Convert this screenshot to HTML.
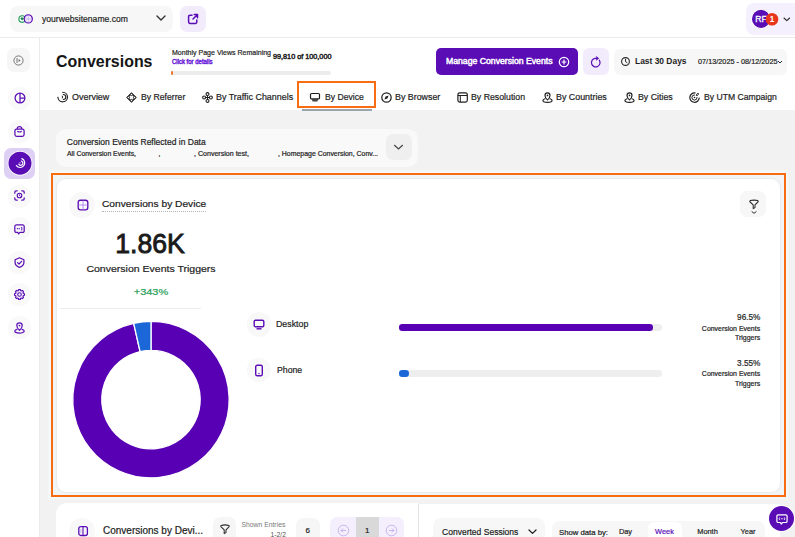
<!DOCTYPE html>
<html><head><meta charset="utf-8"><style>
html,body{margin:0;padding:0;width:795px;height:537px;overflow:hidden;background:#fff;}
body{position:relative;font-family:"Liberation Sans",sans-serif;}
.t{position:absolute;white-space:nowrap;line-height:1;}
.b{position:absolute;box-sizing:border-box;}
svg.b{overflow:visible}
</style></head><body>
<div class="b" style="left:0px;top:0px;width:795px;height:537px;background:#ffffff;border-radius:0px;"></div>
<div class="b" style="left:39.5px;top:110px;width:756px;height:427px;background:#f2f2f2;border-radius:0px;"></div>
<div class="b" style="left:0px;top:37px;width:795px;height:1px;background:#ebebeb;border-radius:0px;"></div>
<div class="b" style="left:38.6px;top:38px;width:1.2px;height:499px;background:#ececec;border-radius:0px;"></div>
<div class="b" style="left:10px;top:6px;width:163px;height:26px;background:#f7f7f7;border-radius:8px;"></div>
<svg class="b" style="left:14px;top:8px;" width="26" height="22" viewBox="0 0 26 22"><circle cx="8.2" cy="11.1" r="3.3" fill="#fff" stroke="#1a9a55" stroke-width="1.1"/><path d="M6.9 10.5 a0.75 0.75 0 0 1 1.3-0.5 a0.75 0.75 0 0 1 1.3 0.5 c0 0.8-1.3 1.5-1.3 1.5 c0 0-1.3-0.7-1.3-1.5z" fill="#12883f" stroke="#12883f" stroke-width="0.7"/><circle cx="14.3" cy="10.9" r="4.0" fill="#fbf8ff" stroke="#5b0db5" stroke-width="1.3"/><path d="M14.3 7.1 V14.7 M10.5 10.9 H18.1" stroke="#c2a6f0" stroke-width="0.7"/><path d="M12.9 7.5 Q11.9 10.9 12.9 14.3 M15.7 7.5 Q16.7 10.9 15.7 14.3" stroke="#d6c3f5" stroke-width="0.6" fill="none"/></svg>
<div class="t" style="left:42px;top:14.00px;font-size:9.8px;font-weight:400;color:#1e1e1e;letter-spacing:0.000px;-webkit-text-stroke:0.2px currentColor;transform:scaleX(0.877);transform-origin:left 0;">yourwebsitename.com</div>
<svg class="b" style="left:156px;top:15px;" width="10" height="7" viewBox="0 0 10 7"><path d="M1 1 L5 5 L9 1" stroke="#333" stroke-width="1.4" fill="none" stroke-linecap="round" stroke-linejoin="round"/></svg>
<div class="b" style="left:180px;top:6px;width:26px;height:26px;background:#f1ebfc;border-radius:7px;"></div>
<svg class="b" style="left:187px;top:13px;" width="12" height="12" viewBox="0 0 12 12"><path d="M5 2.2 H3 a1.4 1.4 0 0 0-1.4 1.4 V9 a1.4 1.4 0 0 0 1.4 1.4 H8.4 A1.4 1.4 0 0 0 9.8 9 V7" stroke="#5b0db5" stroke-width="1.5" fill="none" stroke-linecap="round"/><path d="M6 6 L10.5 1.5 M7.2 1.5 H10.5 V4.8" stroke="#5b0db5" stroke-width="1.5" fill="none" stroke-linecap="round" stroke-linejoin="round"/></svg>
<div class="b" style="left:746.3px;top:3.4px;width:60px;height:31.7px;background:#f4f0fd;border-radius:8px;"></div>
<svg class="b" style="left:750px;top:8px;" width="32" height="22" viewBox="0 0 32 22"><circle cx="11" cy="10.9" r="9.6" fill="#5b0db5" stroke="#fff" stroke-width="1.1"/><text x="11" y="14" font-family="Liberation Sans" font-size="8.6" font-weight="400" fill="#fff" stroke="#fff" stroke-width="0.3" text-anchor="middle">RF</text><circle cx="22" cy="11.2" r="6.3" fill="#e8361c"/><text x="22" y="14.2" font-family="Liberation Sans" font-size="8.2" font-weight="700" fill="#fff" text-anchor="middle">1</text></svg>
<svg class="b" style="left:783px;top:16.5px;" width="8" height="6" viewBox="0 0 8 6"><path d="M1 1 L3.8 3.6 L6.6 1" stroke="#2a2a2a" stroke-width="1.1" fill="none" stroke-linecap="round" stroke-linejoin="round"/></svg>
<div class="b" style="left:7px;top:47.5px;width:23px;height:24.5px;background:#f6f6f6;border-radius:7px;"></div>
<svg class="b" style="left:13px;top:54.5px;" width="11" height="11" viewBox="0 0 11 11"><circle cx="5.5" cy="5.5" r="4.6" stroke="#6a6a6a" stroke-width="0.9" fill="none"/><path d="M4 3 v5" stroke="#6a6a6a" stroke-width="0.9"/><path d="M5.6 4 L7.6 5.5 L5.6 7z" fill="#6a6a6a"/></svg>
<div class="b" style="left:8.0px;top:86.5px;width:23px;height:23px;background:#f9f9f9;border-radius:11.5px;"></div>
<div class="b" style="left:8.0px;top:119.5px;width:23px;height:23px;background:#f9f9f9;border-radius:11.5px;"></div>
<div class="b" style="left:8.0px;top:184.5px;width:23px;height:23px;background:#f9f9f9;border-radius:11.5px;"></div>
<div class="b" style="left:8.0px;top:217.0px;width:23px;height:23px;background:#f9f9f9;border-radius:11.5px;"></div>
<div class="b" style="left:8.0px;top:250.5px;width:23px;height:23px;background:#f9f9f9;border-radius:11.5px;"></div>
<div class="b" style="left:8.0px;top:283.0px;width:23px;height:23px;background:#f9f9f9;border-radius:11.5px;"></div>
<div class="b" style="left:8.0px;top:316.0px;width:23px;height:23px;background:#f9f9f9;border-radius:11.5px;"></div>
<svg class="b" style="left:13.5px;top:92px;" width="12" height="12" viewBox="0 0 12 12"><circle cx="6" cy="6" r="4.9" stroke="#5b0db5" stroke-width="1.25" fill="none"/><path d="M6 1.1 V10.9 M6 6 H10.9" stroke="#5b0db5" stroke-width="1.25"/></svg>
<svg class="b" style="left:14px;top:125.5px;" width="11" height="11" viewBox="0 0 11 11"><rect x="0.9" y="3" width="9.2" height="7.3" rx="1.8" stroke="#5b0db5" stroke-width="1.25" fill="none"/><path d="M3.3 3 V2.6 A2.2 2 0 0 1 7.7 2.6 V3" stroke="#5b0db5" stroke-width="1.25" fill="none"/><path d="M3.3 5.2 Q5.5 6.8 7.7 5.2" stroke="#5b0db5" stroke-width="1.1" fill="none"/></svg>
<div class="b" style="left:4.3px;top:148px;width:30.5px;height:30.7px;background:#ddd0f4;border-radius:7px;"></div>
<svg class="b" style="left:6.5px;top:150.3px;" width="26" height="26" viewBox="0 0 26 26"><circle cx="13" cy="13.2" r="12.3" fill="#fff"/><circle cx="13" cy="13.2" r="11.5" fill="#5b0db5"/><path d="M9.4 15.6 A4.6 4.6 0 1 0 14.8 8.6 M11.8 14.2 A2.2 2.2 0 1 0 14.4 11 M12.9 12.8 h.1" stroke="#fff" stroke-width="1.2" fill="none" stroke-linecap="round"/></svg>
<svg class="b" style="left:14px;top:190px;" width="11" height="11" viewBox="0 0 11 11"><path d="M0.8 3.2 V2.2 A1.4 1.4 0 0 1 2.2 0.8 H3.2 M7.8 0.8 H8.8 A1.4 1.4 0 0 1 10.2 2.2 V3.2 M10.2 7.8 V8.8 A1.4 1.4 0 0 1 8.8 10.2 H7.8 M3.2 10.2 H2.2 A1.4 1.4 0 0 1 0.8 8.8 V7.8" stroke="#5b0db5" stroke-width="1.25" fill="none" stroke-linecap="round"/><circle cx="5.5" cy="5.5" r="2.3" stroke="#5b0db5" stroke-width="1.1" fill="none"/><path d="M5.5 4.3 V5.6 L6.5 6.2" stroke="#5b0db5" stroke-width="0.9" fill="none"/></svg>
<svg class="b" style="left:14px;top:223.5px;" width="11" height="11" viewBox="0 0 11 11"><path d="M2.3 0.9 H8.7 A1.5 1.5 0 0 1 10.2 2.4 V6.9 A1.5 1.5 0 0 1 8.7 8.4 H6 L4.6 9.9 L3.9 8.4 H2.3 A1.5 1.5 0 0 1 0.8 6.9 V2.4 A1.5 1.5 0 0 1 2.3 0.9z" stroke="#5b0db5" stroke-width="1.25" fill="none" stroke-linejoin="round"/><path d="M3.4 4.7 h.1 M5.2 4.7 h.1" stroke="#5b0db5" stroke-width="1.3" stroke-linecap="round"/><path d="M7 3.4 H7.9 V6 H7" stroke="#5b0db5" stroke-width="0.9" fill="none"/></svg>
<svg class="b" style="left:14px;top:256.8px;" width="11" height="11" viewBox="0 0 11 11"><path d="M5.5 0.8 L9.9 2.8 V5.6 C9.9 8 7.9 9.6 5.5 10.3 C3.1 9.6 1.1 8 1.1 5.6 V2.8z" stroke="#5b0db5" stroke-width="1.25" fill="none" stroke-linejoin="round"/><path d="M3.5 5.6 L5 7 L7.6 4.3" stroke="#5b0db5" stroke-width="1.2" fill="none" stroke-linecap="round" stroke-linejoin="round"/></svg>
<svg class="b" style="left:14px;top:289px;" width="11" height="11" viewBox="0 0 11 11"><path d="M4.72 0.56 L6.28 0.56 L6.74 1.80 L7.24 2.01 L8.44 1.45 L9.55 2.56 L8.99 3.76 L9.20 4.26 L10.44 4.72 L10.44 6.28 L9.20 6.74 L8.99 7.24 L9.55 8.44 L8.44 9.55 L7.24 8.99 L6.74 9.20 L6.28 10.44 L4.72 10.44 L4.26 9.20 L3.76 8.99 L2.56 9.55 L1.45 8.44 L2.01 7.24 L1.80 6.74 L0.56 6.28 L0.56 4.72 L1.80 4.26 L2.01 3.76 L1.45 2.56 L2.56 1.45 L3.76 2.01 L4.26 1.80z" stroke="#5b0db5" stroke-width="1.2" fill="none" stroke-linejoin="round"/><circle cx="5.5" cy="5.5" r="1.8" stroke="#5b0db5" stroke-width="1.1" fill="none"/></svg>
<svg class="b" style="left:14px;top:321.5px;" width="11" height="12" viewBox="0 0 11 12"><path d="M5.5 8.4 C5.5 8.4 8.2 6 8.2 3.6 A2.7 2.7 0 0 0 2.8 3.6 C2.8 6 5.5 8.4 5.5 8.4z" stroke="#5b0db5" stroke-width="1.2" fill="none" stroke-linejoin="round"/><circle cx="5.5" cy="3.6" r="0.9" fill="#5b0db5"/><path d="M3 7.3 C1.6 7.7 0.8 8.3 0.8 9.1 C0.8 10.3 2.9 11.1 5.5 11.1 C8.1 11.1 10.2 10.3 10.2 9.1 C10.2 8.3 9.4 7.7 8 7.3" stroke="#5b0db5" stroke-width="1.2" fill="none" stroke-linecap="round"/></svg>
<div class="t" style="left:56px;top:53.78px;font-size:16.8px;font-weight:700;color:#151515;letter-spacing:0.000px;transform:scaleX(0.949);transform-origin:left 0;">Conversions</div>
<div class="t" style="left:171.5px;top:49.24px;font-size:7.4px;font-weight:400;color:#1e1e1e;letter-spacing:0.000px;-webkit-text-stroke:0.2px currentColor;transform:scaleX(0.950);transform-origin:left 0;">Monthly Page Views Remaining</div>
<div class="t" style="left:171.5px;top:58.50px;font-size:6.5px;font-weight:400;color:#6a1bd8;letter-spacing:0.000px;-webkit-text-stroke:0.45px currentColor;transform:scaleX(0.919);transform-origin:left 0;">Click for details</div>
<div class="t" style="left:273px;top:53.31px;font-size:7.2px;font-weight:400;color:#1e1e1e;letter-spacing:0.000px;-webkit-text-stroke:0.45px currentColor;transform:scaleX(1.009);transform-origin:left 0;">99,810 of 100,000</div>
<div class="b" style="left:171px;top:71px;width:160px;height:4px;background:#ececec;border-radius:2px;"></div>
<div class="b" style="left:171px;top:71px;width:2px;height:4px;background:#f07a2a;border-radius:1px;"></div>
<div class="b" style="left:436px;top:48px;width:142px;height:26.5px;background:#5b0db5;border-radius:5px;"></div>
<div class="t" style="left:446.3px;top:57.19px;font-size:8.4px;font-weight:400;color:#fff;letter-spacing:0.000px;-webkit-text-stroke:0.45px currentColor;transform:scaleX(1.035);transform-origin:left 0;">Manage Conversion Events</div>
<svg class="b" style="left:558px;top:55.5px;" width="12" height="12" viewBox="0 0 12 12"><circle cx="6" cy="6" r="4.7" stroke="#fff" stroke-width="1.2" fill="none"/><path d="M6 3.6 V8.4 M3.6 6 H8.4" stroke="#fff" stroke-width="1.2"/></svg>
<div class="b" style="left:583px;top:48px;width:26px;height:26.5px;background:#f1ebfc;border-radius:6px;"></div>
<svg class="b" style="left:589.5px;top:55.5px;" width="12" height="12" viewBox="0 0 12 12"><path d="M9.3 4.2 A4.3 4.3 0 1 1 5 2.4 H7.6" stroke="#5b0db5" stroke-width="1.2" fill="none" stroke-linecap="round"/><path d="M6.4 0.9 L8.3 2.4 L6.4 3.9" stroke="#5b0db5" stroke-width="1.15" fill="none" stroke-linecap="round" stroke-linejoin="round"/></svg>
<div class="b" style="left:614px;top:49px;width:172.5px;height:25.5px;background:#f7f7f7;border-radius:6px;"></div>
<svg class="b" style="left:619.5px;top:56px;" width="11" height="11" viewBox="0 0 11 11"><circle cx="5.5" cy="5.5" r="3.9" stroke="#2a2a2a" stroke-width="1.1" fill="none"/><path d="M5.5 3.3 V5.6 L7 6.6" stroke="#2a2a2a" stroke-width="1" fill="none" stroke-linecap="round"/></svg>
<div class="t" style="left:635px;top:57.18px;font-size:9px;font-weight:700;color:#1e1e1e;letter-spacing:0.000px;transform:scaleX(0.936);transform-origin:left 0;">Last 30 Days</div>
<div class="t" style="left:697.7px;top:58.24px;font-size:7.4px;font-weight:400;color:#1e1e1e;letter-spacing:0.000px;-webkit-text-stroke:0.2px currentColor;transform:scaleX(0.987);transform-origin:left 0;">07/13/2025 - 08/12/2025</div>
<svg class="b" style="left:777px;top:59.5px;" width="6" height="5" viewBox="0 0 6 5"><path d="M1 1 L3 3 L5 1" stroke="#333" stroke-width="1" fill="none"/></svg>
<div class="t" style="left:72px;top:92.69px;font-size:8.4px;font-weight:400;color:#1e1e1e;letter-spacing:0.000px;-webkit-text-stroke:0.2px currentColor;transform:scaleX(1.069);transform-origin:left 0;">Overview</div>
<div class="t" style="left:140.6px;top:92.69px;font-size:8.4px;font-weight:400;color:#1e1e1e;letter-spacing:0.000px;-webkit-text-stroke:0.2px currentColor;transform:scaleX(1.034);transform-origin:left 0;">By Referrer</div>
<div class="t" style="left:216px;top:92.69px;font-size:8.4px;font-weight:400;color:#1e1e1e;letter-spacing:0.000px;-webkit-text-stroke:0.2px currentColor;transform:scaleX(1.064);transform-origin:left 0;">By Traffic Channels</div>
<div class="t" style="left:324.5px;top:92.69px;font-size:8.4px;font-weight:400;color:#1e1e1e;letter-spacing:0.000px;-webkit-text-stroke:0.2px currentColor;transform:scaleX(1.029);transform-origin:left 0;">By Device</div>
<div class="t" style="left:395px;top:92.69px;font-size:8.4px;font-weight:400;color:#1e1e1e;letter-spacing:0.000px;-webkit-text-stroke:0.2px currentColor;transform:scaleX(1.058);transform-origin:left 0;">By Browser</div>
<div class="t" style="left:471px;top:92.69px;font-size:8.4px;font-weight:400;color:#1e1e1e;letter-spacing:0.000px;-webkit-text-stroke:0.2px currentColor;transform:scaleX(1.045);transform-origin:left 0;">By Resolution</div>
<div class="t" style="left:555.8px;top:92.69px;font-size:8.4px;font-weight:400;color:#1e1e1e;letter-spacing:0.000px;-webkit-text-stroke:0.2px currentColor;transform:scaleX(1.059);transform-origin:left 0;">By Countries</div>
<div class="t" style="left:638px;top:92.69px;font-size:8.4px;font-weight:400;color:#1e1e1e;letter-spacing:0.000px;-webkit-text-stroke:0.2px currentColor;transform:scaleX(1.050);transform-origin:left 0;">By Cities</div>
<div class="t" style="left:704.4px;top:92.69px;font-size:8.4px;font-weight:400;color:#1e1e1e;letter-spacing:0.000px;-webkit-text-stroke:0.2px currentColor;transform:scaleX(1.030);transform-origin:left 0;">By UTM Campaign</div>
<svg class="b" style="left:56px;top:91px;" width="13" height="12" viewBox="0 0 13 12"><path d="M6.7 1.2 A4.8 4.8 0 1 1 1.9 6.2" stroke="#1e1e1e" stroke-width="1.15" fill="none" stroke-linecap="round"/><path d="M7.3 3.5 A2.5 2.5 0 0 1 7.3 8.5" stroke="#1e1e1e" stroke-width="1.1" fill="none" stroke-linecap="round"/><path d="M6.3 5.1 L6.6 6.1 L6.3 7" stroke="#1e1e1e" stroke-width="1" fill="none" stroke-linecap="round"/></svg>
<svg class="b" style="left:126px;top:91.5px;" width="11" height="11" viewBox="0 0 11 11"><path d="M5.5 1.2 L9.8 5.5 L5.5 9.8 L1.2 5.5z" stroke="#1e1e1e" stroke-width="1.4" fill="none" stroke-linejoin="round"/><circle cx="5.5" cy="2.4" r="1.2" stroke="#1e1e1e" stroke-width="1" fill="#fff"/><circle cx="5.5" cy="8.6" r="1.2" stroke="#1e1e1e" stroke-width="1" fill="#fff"/><circle cx="2.4" cy="5.5" r="1.2" stroke="#1e1e1e" stroke-width="1" fill="#fff"/><circle cx="8.6" cy="5.5" r="1.2" stroke="#1e1e1e" stroke-width="1" fill="#fff"/></svg>
<svg class="b" style="left:201.5px;top:91.5px;" width="11" height="11" viewBox="0 0 11 11"><path d="M5.5 3.3 V7.7 M3.3 5.5 H7.7" stroke="#1e1e1e" stroke-width="1"/><circle cx="5.5" cy="2.1" r="1.45" stroke="#1e1e1e" stroke-width="1.1" fill="#fff"/><circle cx="5.5" cy="8.9" r="1.45" stroke="#1e1e1e" stroke-width="1.1" fill="#fff"/><circle cx="2.1" cy="5.5" r="1.45" stroke="#1e1e1e" stroke-width="1.1" fill="#fff"/><circle cx="8.9" cy="5.5" r="1.45" stroke="#1e1e1e" stroke-width="1.1" fill="#fff"/></svg>
<svg class="b" style="left:309px;top:92px;" width="12" height="11" viewBox="0 0 12 11"><rect x="1.5" y="1.5" width="9" height="5.3" rx="1.1" stroke="#1e1e1e" stroke-width="1.2" fill="none"/><path d="M2.8 7.2 H9.2 L8.4 9.4 H3.6z" fill="#1e1e1e" opacity="0.85"/></svg>
<svg class="b" style="left:380.5px;top:91.5px;" width="11" height="11" viewBox="0 0 11 11"><circle cx="5.5" cy="5.5" r="4.7" stroke="#1e1e1e" stroke-width="1.2" fill="none"/><path d="M7.6 3.4 L6.4 6.4 L3.4 7.6 L4.6 4.6z" fill="#1e1e1e"/></svg>
<svg class="b" style="left:456.5px;top:92px;" width="11" height="11" viewBox="0 0 11 11"><rect x="0.9" y="0.9" width="9.4" height="9.2" rx="1.8" stroke="#1e1e1e" stroke-width="1.2" fill="none"/><path d="M1 3.5 H10.2 M3.3 3.5 V10" stroke="#1e1e1e" stroke-width="1"/></svg>
<svg class="b" style="left:541.5px;top:92px;" width="11" height="11" viewBox="0 0 11 11"><path d="M5.5 7.9 C5.5 7.9 8 5.7 8 3.4 A2.5 2.5 0 0 0 3 3.4 C3 5.7 5.5 7.9 5.5 7.9z" stroke="#1e1e1e" stroke-width="1.15" fill="none" stroke-linejoin="round"/><circle cx="5.5" cy="3.4" r="0.85" fill="#1e1e1e"/><path d="M3 6.8 C1.7 7.2 0.9 7.8 0.9 8.5 C0.9 9.6 3 10.3 5.5 10.3 C8 10.3 10.1 9.6 10.1 8.5 C10.1 7.8 9.3 7.2 8 6.8" stroke="#1e1e1e" stroke-width="1.15" fill="none" stroke-linecap="round"/></svg>
<svg class="b" style="left:623.5px;top:92px;" width="11" height="11" viewBox="0 0 11 11"><path d="M5.5 7.9 C5.5 7.9 8 5.7 8 3.4 A2.5 2.5 0 0 0 3 3.4 C3 5.7 5.5 7.9 5.5 7.9z" stroke="#1e1e1e" stroke-width="1.15" fill="none" stroke-linejoin="round"/><circle cx="5.5" cy="3.4" r="0.85" fill="#1e1e1e"/><path d="M3 6.8 C1.7 7.2 0.9 7.8 0.9 8.5 C0.9 9.6 3 10.3 5.5 10.3 C8 10.3 10.1 9.6 10.1 8.5 C10.1 7.8 9.3 7.2 8 6.8" stroke="#1e1e1e" stroke-width="1.15" fill="none" stroke-linecap="round"/></svg>
<svg class="b" style="left:689px;top:91.5px;" width="11" height="11" viewBox="0 0 11 11"><path d="M6 0.9 A4.7 4.7 0 1 0 10.2 6" stroke="#1e1e1e" stroke-width="1.2" fill="none" stroke-linecap="round"/><path d="M5.5 2.9 A2.6 2.6 0 1 0 8.1 5.5" stroke="#1e1e1e" stroke-width="1" fill="none" stroke-linecap="round"/><circle cx="5.5" cy="5.5" r="0.8" fill="#1e1e1e"/><path d="M7.3 3.6 C7.3 2.3 8.2 1.3 9.3 1.3 C9.6 2.4 9.1 3.6 7.3 3.6z" stroke="#1e1e1e" stroke-width="1" fill="none"/></svg>
<div class="b" style="left:302px;top:109px;width:70px;height:2px;background:#9aa5ae;border-radius:0px;"></div>
<div class="b" style="left:297.4px;top:81px;width:78.4px;height:27.2px;border:2.3px solid #f86c12;"></div>
<div class="b" style="left:56px;top:128.5px;width:362px;height:38px;background:#f9f9f9;border-radius:10px;"></div>
<div class="t" style="left:66.8px;top:137.70px;font-size:8.5px;font-weight:400;color:#1e1e1e;letter-spacing:0.000px;-webkit-text-stroke:0.2px currentColor;">Conversion Events Reflected in Data</div>
<div class="t" style="left:66.8px;top:150.50px;font-size:6.5px;font-weight:400;color:#1e1e1e;letter-spacing:0.000px;-webkit-text-stroke:0.2px currentColor;transform:scaleX(1.055);transform-origin:left 0;">All Conversion Events,</div>
<div class="t" style="left:158.5px;top:150.50px;font-size:6.5px;font-weight:400;color:#1e1e1e;letter-spacing:0.000px;-webkit-text-stroke:0.2px currentColor;">,</div>
<div class="t" style="left:193.6px;top:150.50px;font-size:6.5px;font-weight:400;color:#1e1e1e;letter-spacing:0.000px;-webkit-text-stroke:0.2px currentColor;transform:scaleX(1.087);transform-origin:left 0;">, Conversion test,</div>
<div class="t" style="left:278.3px;top:150.50px;font-size:6.5px;font-weight:400;color:#1e1e1e;letter-spacing:0.000px;-webkit-text-stroke:0.2px currentColor;transform:scaleX(1.066);transform-origin:left 0;">, Homepage Conversion, Conv...</div>
<div class="b" style="left:386px;top:134.3px;width:25.5px;height:25.7px;background:#efefef;border-radius:7px;"></div>
<svg class="b" style="left:393px;top:144px;" width="11" height="7" viewBox="0 0 11 7"><path d="M1.5 1.3 L5.5 5 L9.5 1.3" stroke="#444" stroke-width="1.2" fill="none" stroke-linecap="round"/></svg>
<div class="b" style="left:51px;top:173px;width:735px;height:323.5px;background:#f1f5f6;border-radius:0px;box-shadow:0 0 0 2.5px #f5f8f8;"></div>
<div class="b" style="left:51px;top:173px;width:735px;height:323.5px;border:2.6px solid #f86c12;"></div>
<div class="b" style="left:55.5px;top:177.8px;width:725px;height:315px;background:#ffffff;border-radius:10px;border:1px solid #ebebeb;"></div>
<div class="b" style="left:69.3px;top:191.8px;width:26px;height:26px;background:#f8f8f8;border-radius:13px;"></div>
<svg class="b" style="left:76.5px;top:198.5px;" width="12" height="12" viewBox="0 0 12 12"><rect x="1.2" y="1.2" width="9.6" height="9.6" rx="2.3" stroke="#5b0db5" stroke-width="1.35" fill="#fbf8ff"/><path d="M6 1.5 V10.5 M1.5 6 H10.5" stroke="#a77be6" stroke-width="0.8"/></svg>
<div class="t" style="left:102.4px;top:198.80px;font-size:9.8px;font-weight:400;color:#1b1b1b;letter-spacing:0.000px;-webkit-text-stroke:0.2px currentColor;transform:scaleX(1.040);transform-origin:left 0;">Conversions by Device</div>
<div class="b" style="left:102.4px;top:210.5px;width:104px;height:0;border-top:1px dotted #b5b5b5;"></div>
<div class="b" style="left:740px;top:191.3px;width:26px;height:26px;background:#f7f7f7;border-radius:7px;"></div>
<svg class="b" style="left:747px;top:197px;" width="14" height="18" viewBox="0 0 14 18"><path d="M3.2 3.6 Q7 2.6 10.8 3.6 Q11.6 4.2 10.9 5 L8 7.8 V10.6 L6.2 11.6 V7.8 L3.1 5 Q2.4 4.2 3.2 3.6z" stroke="#2a2a2a" stroke-width="1.05" fill="none" stroke-linejoin="round"/><path d="M5 14.7 L7 16.3 L9.1 14.7" stroke="#2a2a2a" stroke-width="1" fill="none" stroke-linecap="round"/></svg>
<div class="t" style="left:-50px;width:400px;text-align:center;top:230.42px;font-size:27.5px;font-weight:400;color:#1a1a1a;letter-spacing:0.000px;-webkit-text-stroke:0.9px currentColor;transform:scaleX(0.967);transform-origin:center 0;">1.86K</div>
<div class="t" style="left:-48.80000000000001px;width:400px;text-align:center;top:264.00px;font-size:9.8px;font-weight:400;color:#1e1e1e;letter-spacing:0.000px;-webkit-text-stroke:0.2px currentColor;transform:scaleX(1.074);transform-origin:center 0;">Conversion Events Triggers</div>
<div class="t" style="left:-48.69999999999999px;width:400px;text-align:center;top:287.81px;font-size:9.2px;font-weight:400;color:#1f9d55;letter-spacing:0.000px;-webkit-text-stroke:0.2px currentColor;transform:scaleX(1.195);transform-origin:center 0;">+343%</div>
<div class="b" style="left:60px;top:307.5px;width:141px;height:1px;background:#ececec;border-radius:0px;"></div>
<svg class="b" style="left:0;top:0" width="795" height="537"><path d="M151.00 321.40 A78.2 78.2 0 1 1 133.67 323.34 L140.10 351.62 A49.2 49.2 0 1 0 151.00 350.40z" fill="#5800b3" stroke="#fff" stroke-width="1.3"/><path d="M133.67 323.34 A78.2 78.2 0 0 1 151.00 321.40 L151.00 350.40 A49.2 49.2 0 0 0 140.10 351.62z" fill="#1c67d8" stroke="#fff" stroke-width="1.3"/></svg>
<div class="b" style="left:246.5px;top:312px;width:24.5px;height:24.5px;background:#f8f8f8;border-radius:12.5px;"></div>
<svg class="b" style="left:253px;top:318.5px;" width="12" height="11" viewBox="0 0 12 11"><rect x="1.2" y="1.2" width="9.6" height="6.5" rx="1.3" stroke="#5b0db5" stroke-width="1.4" fill="none"/><path d="M3.5 9.8 H8.5" stroke="#5b0db5" stroke-width="1.4"/></svg>
<div class="t" style="left:275.5px;top:319.72px;font-size:8.6px;font-weight:400;color:#1e1e1e;letter-spacing:0.000px;-webkit-text-stroke:0.2px currentColor;transform:scaleX(1.024);transform-origin:left 0;">Desktop</div>
<div class="b" style="left:246.5px;top:357.5px;width:24.5px;height:24.5px;background:#f8f8f8;border-radius:12.5px;"></div>
<svg class="b" style="left:254px;top:363.5px;" width="10" height="13" viewBox="0 0 10 13"><rect x="1.7" y="1.2" width="6.6" height="10.6" rx="1.6" stroke="#5b0db5" stroke-width="1.4" fill="none"/><path d="M4.3 9.6 H5.7" stroke="#5b0db5" stroke-width="1"/></svg>
<div class="t" style="left:276.5px;top:365.72px;font-size:8.6px;font-weight:400;color:#1e1e1e;letter-spacing:0.000px;-webkit-text-stroke:0.2px currentColor;transform:scaleX(1.014);transform-origin:left 0;">Phone</div>
<div class="b" style="left:399px;top:324px;width:263px;height:6.6px;background:#eeeeee;border-radius:3.3px;"></div>
<div class="b" style="left:399px;top:324px;width:254px;height:6.6px;background:#5800b3;border-radius:3.3px;"></div>
<div class="b" style="left:399px;top:370px;width:263px;height:6.6px;background:#eeeeee;border-radius:3.3px;"></div>
<div class="b" style="left:399px;top:370px;width:9.5px;height:6.6px;background:#1c67d8;border-radius:3.3px;"></div>
<div class="t" style="right:35px;top:313.12px;font-size:8.6px;font-weight:400;color:#1e1e1e;letter-spacing:0.000px;-webkit-text-stroke:0.2px currentColor;transform:scaleX(0.956);transform-origin:right 0;">96.5%</div>
<div class="t" style="right:35px;top:325.63px;font-size:6.7px;font-weight:400;color:#1e1e1e;letter-spacing:0.000px;-webkit-text-stroke:0.2px currentColor;transform:scaleX(1.038);transform-origin:right 0;">Conversion Events</div>
<div class="t" style="right:35px;top:335.03px;font-size:6.7px;font-weight:400;color:#1e1e1e;letter-spacing:0.000px;-webkit-text-stroke:0.2px currentColor;transform:scaleX(1.042);transform-origin:right 0;">Triggers</div>
<div class="t" style="right:35px;top:358.92px;font-size:8.6px;font-weight:400;color:#1e1e1e;letter-spacing:0.000px;-webkit-text-stroke:0.2px currentColor;transform:scaleX(0.956);transform-origin:right 0;">3.55%</div>
<div class="t" style="right:35px;top:371.03px;font-size:6.7px;font-weight:400;color:#1e1e1e;letter-spacing:0.000px;-webkit-text-stroke:0.2px currentColor;transform:scaleX(1.038);transform-origin:right 0;">Conversion Events</div>
<div class="t" style="right:35px;top:380.93px;font-size:6.7px;font-weight:400;color:#1e1e1e;letter-spacing:0.000px;-webkit-text-stroke:0.2px currentColor;transform:scaleX(1.042);transform-origin:right 0;">Triggers</div>
<div class="b" style="left:56px;top:503.2px;width:362px;height:60px;background:#ffffff;border-radius:11px 0 0 0;"></div>
<div class="b" style="left:69px;top:517.5px;width:26px;height:26px;background:#f8f8f8;border-radius:13px;"></div>
<svg class="b" style="left:77.5px;top:525.5px;" width="10" height="10" viewBox="0 0 10 10"><rect x="0.8" y="0.7" width="8.6" height="8.8" rx="2" stroke="#5b0db5" stroke-width="1.3" fill="none"/><path d="M5 0.8 V9.5" stroke="#5b0db5" stroke-width="1.1"/><path d="M2.8 3 V7" stroke="#b9a0ea" stroke-width="0.7"/></svg>
<div class="t" style="left:103px;top:526.03px;font-size:10px;font-weight:400;color:#1b1b1b;letter-spacing:0.000px;-webkit-text-stroke:0.2px currentColor;">Conversions by Devi...</div>
<div class="b" style="left:103px;top:536.5px;width:101px;height:0;border-top:1px dotted #b5b5b5;"></div>
<div class="b" style="left:213px;top:517px;width:23px;height:26px;background:#f6f6f6;border-radius:7px;"></div>
<svg class="b" style="left:218.5px;top:522.5px;" width="12" height="12" viewBox="0 0 12 12"><path d="M2.2 2.4 Q6 1.4 9.8 2.4 Q10.6 3 9.9 3.8 L7 6.8 V9.6 L5.2 10.6 V6.8 L2.1 3.8 Q1.4 3 2.2 2.4z" stroke="#2a2a2a" stroke-width="1.05" fill="none" stroke-linejoin="round"/></svg>
<div class="t" style="left:241.5px;top:522.04px;font-size:6.8px;font-weight:400;color:#777;letter-spacing:0.000px;">Shown Entries</div>
<div class="t" style="right:509px;top:531.74px;font-size:6.8px;font-weight:400;color:#555;letter-spacing:0.000px;">1-2/2</div>
<div class="b" style="left:296px;top:518px;width:23.5px;height:26px;background:#f6f6f6;border-radius:7px;"></div>
<div class="t" style="left:107.69999999999999px;width:400px;text-align:center;top:526.53px;font-size:8px;font-weight:400;color:#1e1e1e;letter-spacing:0.000px;-webkit-text-stroke:0.2px currentColor;">6</div>
<div class="b" style="left:330px;top:517px;width:74px;height:26px;background:#f3effc;border-radius:7px;"></div>
<div class="b" style="left:356px;top:517px;width:22.5px;height:26px;background:#d9d9d9;border-radius:0px;"></div>
<div class="t" style="left:167.2px;width:400px;text-align:center;top:526.53px;font-size:8px;font-weight:400;color:#1e1e1e;letter-spacing:0.000px;-webkit-text-stroke:0.2px currentColor;">1</div>
<svg class="b" style="left:337px;top:523.5px;" width="13" height="13" viewBox="0 0 13 13"><circle cx="6.5" cy="6.5" r="5.3" stroke="#c9b3ef" stroke-width="1" fill="none"/><path d="M9 6.5 H4 M6 4.5 L4 6.5 L6 8.5" stroke="#c9b3ef" stroke-width="1" fill="none"/></svg>
<svg class="b" style="left:385px;top:523.5px;" width="13" height="13" viewBox="0 0 13 13"><circle cx="6.5" cy="6.5" r="5.3" stroke="#c9b3ef" stroke-width="1" fill="none"/><path d="M4 6.5 H9 M7 4.5 L9 6.5 L7 8.5" stroke="#c9b3ef" stroke-width="1" fill="none"/></svg>
<div class="b" style="left:418px;top:503.5px;width:362px;height:60px;background:#ffffff;border-radius:0px;"></div>
<div class="b" style="left:418px;top:503.5px;width:1px;height:60px;background:#e3e3e3;border-radius:0px;"></div>
<div class="b" style="left:433px;top:517.5px;width:112px;height:26px;background:#f7f7f7;border-radius:8px;"></div>
<div class="t" style="left:442.3px;top:527.51px;font-size:9.2px;font-weight:400;color:#1e1e1e;letter-spacing:0.000px;-webkit-text-stroke:0.2px currentColor;transform:scaleX(0.928);transform-origin:left 0;">Converted Sessions</div>
<svg class="b" style="left:528px;top:528.8px;" width="9" height="5.5" viewBox="0 0 9 5.5"><path d="M1 1 L4.5 4.4 L8 1" stroke="#222" stroke-width="1.3" fill="none" stroke-linecap="round" stroke-linejoin="round"/></svg>
<div class="b" style="left:552px;top:520.8px;width:213px;height:26px;background:#f7f7f7;border-radius:8px;"></div>
<div class="t" style="left:559px;top:528.57px;font-size:7px;font-weight:400;color:#1e1e1e;letter-spacing:0.000px;-webkit-text-stroke:0.2px currentColor;transform:scaleX(1.104);transform-origin:left 0;">Show data by:</div>
<div class="b" style="left:647.5px;top:522.4px;width:34.5px;height:22px;background:#ffffff;border-radius:6px;"></div>
<div class="t" style="left:425.5px;width:400px;text-align:center;top:528.24px;font-size:7.4px;font-weight:400;color:#1e1e1e;letter-spacing:0.000px;-webkit-text-stroke:0.2px currentColor;">Day</div>
<div class="t" style="left:464.5px;width:400px;text-align:center;top:528.24px;font-size:7.4px;font-weight:400;color:#5b0db5;letter-spacing:0.000px;-webkit-text-stroke:0.2px currentColor;">Week</div>
<div class="t" style="left:507.5px;width:400px;text-align:center;top:528.24px;font-size:7.4px;font-weight:400;color:#1e1e1e;letter-spacing:0.000px;-webkit-text-stroke:0.2px currentColor;">Month</div>
<div class="t" style="left:548px;width:400px;text-align:center;top:528.24px;font-size:7.4px;font-weight:400;color:#1e1e1e;letter-spacing:0.000px;-webkit-text-stroke:0.2px currentColor;">Year</div>
<div class="b" style="left:768px;top:504.8px;width:27.3px;height:27.3px;background:#ffffff;border-radius:14px;"></div>
<div class="b" style="left:769px;top:505.8px;width:25.3px;height:25.3px;background:#5b0db5;border-radius:13px;"></div>
<svg class="b" style="left:776px;top:513.5px;" width="12" height="11" viewBox="0 0 12 11"><path d="M2.2 0.9 H9.8 A1.3 1.3 0 0 1 11.1 2.2 V7.2 A1.3 1.3 0 0 1 9.8 8.5 H6.6 L5.2 10 L4.4 8.5 H2.2 A1.3 1.3 0 0 1 0.9 7.2 V2.2 A1.3 1.3 0 0 1 2.2 0.9z" stroke="#fff" stroke-width="1.2" fill="none" stroke-linejoin="round"/><path d="M3.6 3.5 L3.2 4.7 L3.6 5.9 M8.4 3.5 L8.8 4.7 L8.4 5.9" stroke="#fff" stroke-width="0.9" fill="none"/><path d="M5.3 4.7 h.1 M6.7 4.7 h.1" stroke="#fff" stroke-width="1.1" stroke-linecap="round"/></svg>
</body></html>
